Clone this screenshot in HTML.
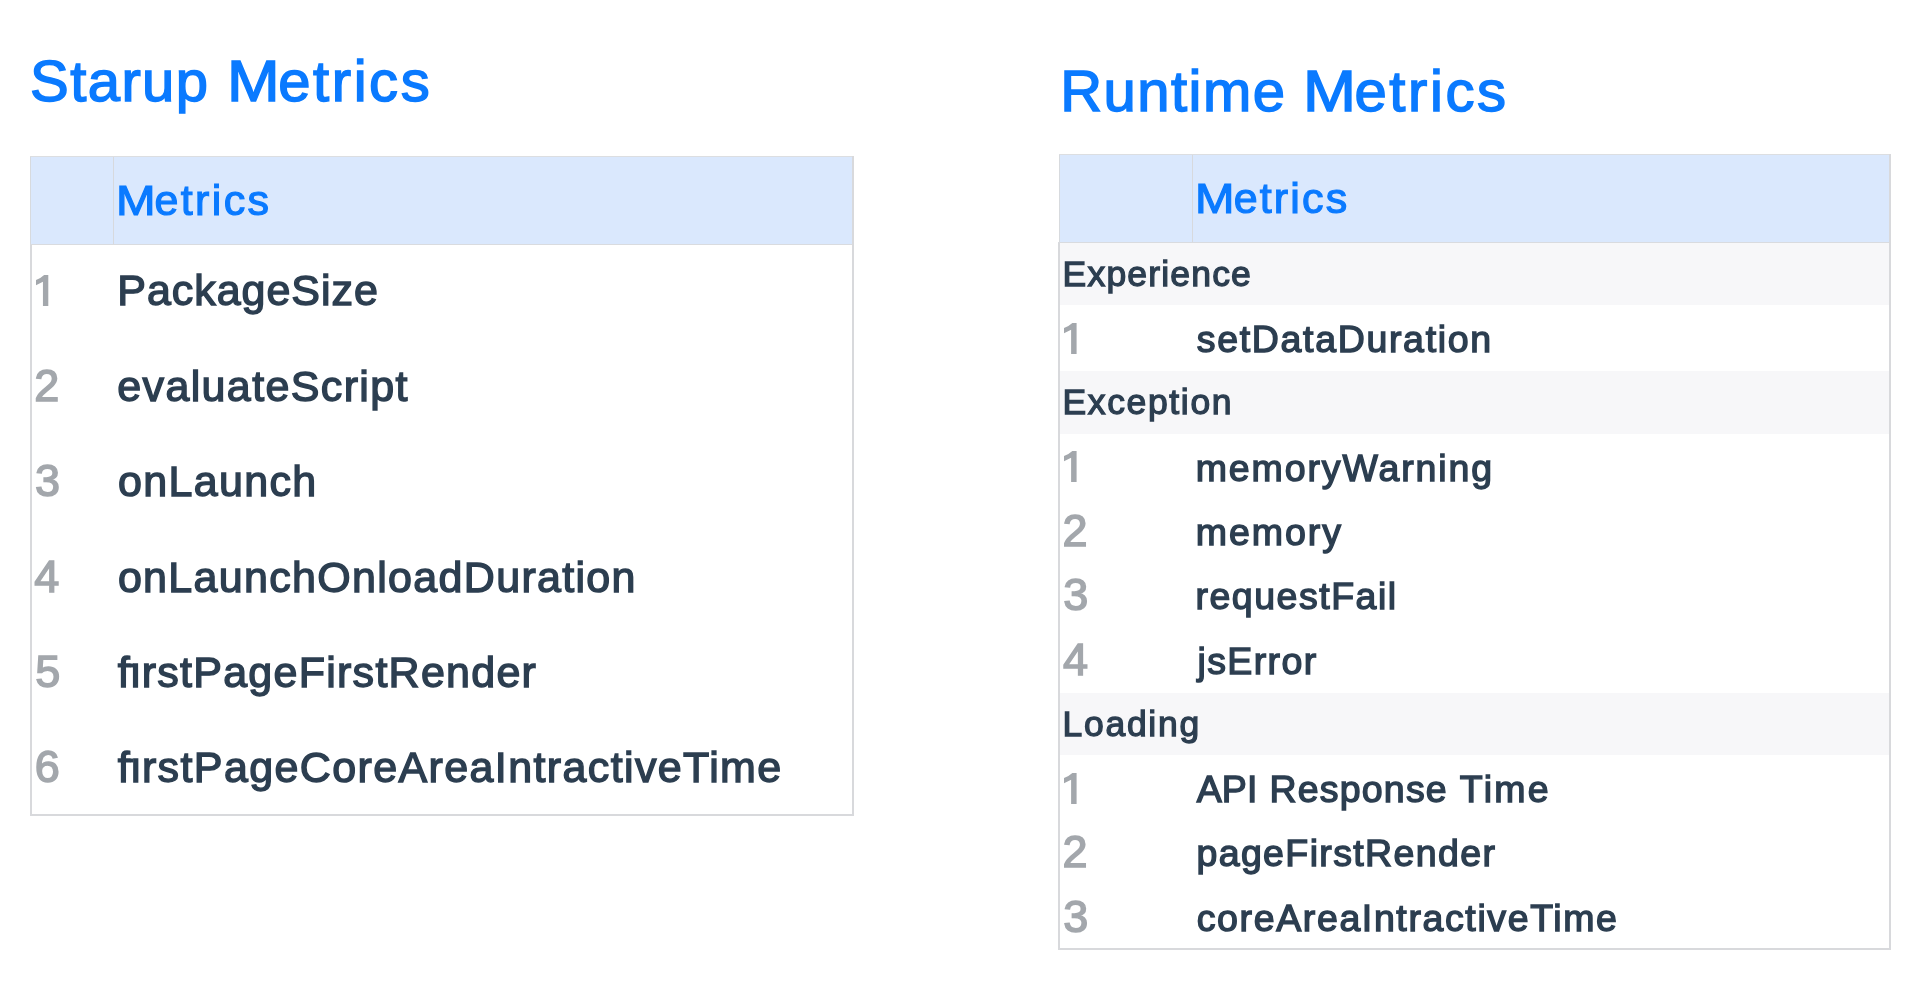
<!DOCTYPE html>
<html lang="en"><head><meta charset="utf-8"><title>Metrics</title><style>
html,body{margin:0;padding:0;background:#fff;}
body{width:1920px;height:988px;position:relative;overflow:hidden;font-family:"Liberation Sans",sans-serif;}
.t{position:absolute;white-space:nowrap;line-height:1;}
.L{position:absolute;left:0;top:0;width:1920px;height:988px;will-change:transform;}
.b{position:absolute;box-sizing:border-box;}

</style></head><body>
<div class="b" style="left:31px;top:157px;width:821px;height:87px;background:#dae8fd;"></div>
<div class="b" style="left:30px;top:156px;width:824px;height:1px;background:#dcdee1;"></div>
<div class="b" style="left:30px;top:157px;width:1px;height:87px;background:#d7dade;"></div>
<div class="b" style="left:113px;top:157px;width:1px;height:87px;background:#d7d9dd;"></div>
<div class="b" style="left:30px;top:244px;width:824px;height:1px;background:#d9dbdf;"></div>
<div class="b" style="left:30px;top:245px;width:2px;height:571px;background:#d8d9dc;"></div>
<div class="b" style="left:852px;top:156px;width:2px;height:660px;background:#d8d9dc;"></div>
<div class="b" style="left:30px;top:814px;width:824px;height:2px;background:#d8d9dc;"></div>
<div class="b" style="left:1060px;top:155px;width:829px;height:87px;background:#dae8fd;"></div>
<div class="b" style="left:1060px;top:243px;width:829px;height:62px;background:#f7f7f9;"></div>
<div class="b" style="left:1060px;top:371px;width:829px;height:63px;background:#f7f7f9;"></div>
<div class="b" style="left:1060px;top:693px;width:829px;height:62px;background:#f7f7f9;"></div>
<div class="b" style="left:1059px;top:154px;width:832px;height:1px;background:#dcdee1;"></div>
<div class="b" style="left:1059px;top:155px;width:1px;height:87px;background:#d7dade;"></div>
<div class="b" style="left:1192px;top:155px;width:1px;height:87px;background:#d7d9dd;"></div>
<div class="b" style="left:1058px;top:242px;width:833px;height:1px;background:#d9dbdf;"></div>
<div class="b" style="left:1058px;top:243px;width:2px;height:707px;background:#d8d9dc;"></div>
<div class="b" style="left:1889px;top:154px;width:2px;height:796px;background:#d8d9dc;"></div>
<div class="b" style="left:1058px;top:948px;width:833px;height:2px;background:#d8d9dc;"></div>
<svg class="b" style="left:35.80px;top:275.00px;overflow:visible" width="12.30" height="31.00" viewBox="0 0 12.4 31" preserveAspectRatio="none"><path fill="#a3a7ac" d="M12.4 0V31H7V6.7L0 10.2V5.1Q4.6 3.4 8.2 0Z"/></svg>
<svg class="b" style="left:1064.10px;top:322.90px;overflow:visible" width="12.60" height="31.00" viewBox="0 0 12.4 31" preserveAspectRatio="none"><path fill="#a3a7ac" d="M12.4 0V31H7V6.7L0 10.2V5.1Q4.6 3.4 8.2 0Z"/></svg>
<svg class="b" style="left:1064.10px;top:451.44px;overflow:visible" width="12.60" height="31.00" viewBox="0 0 12.4 31" preserveAspectRatio="none"><path fill="#a3a7ac" d="M12.4 0V31H7V6.7L0 10.2V5.1Q4.6 3.4 8.2 0Z"/></svg>
<svg class="b" style="left:1064.10px;top:772.79px;overflow:visible" width="12.60" height="31.00" viewBox="0 0 12.4 31" preserveAspectRatio="none"><path fill="#a3a7ac" d="M12.4 0V31H7V6.7L0 10.2V5.1Q4.6 3.4 8.2 0Z"/></svg>
<div class="L">
<span class="t" style="left:30.09px;top:52.00px;font-size:58px;color:#0a7aff;-webkit-text-stroke:1.5px #0a7aff;letter-spacing:1.416px;">Starup </span>
<span class="t" style="left:226.63px;top:52.00px;font-size:58px;color:#0a7aff;-webkit-text-stroke:1.5px #0a7aff;letter-spacing:0.000px;transform:scaleX(1.0898);transform-origin:0 0;">M</span><span class="t" style="left:278.26px;top:52.00px;font-size:58px;color:#0a7aff;-webkit-text-stroke:1.5px #0a7aff;letter-spacing:2.571px;">etrics</span>
<span class="t" style="left:116.01px;top:179.00px;font-size:43px;color:#0a7aff;-webkit-text-stroke:1.2px #0a7aff;letter-spacing:0.000px;transform:scaleX(1.1042);transform-origin:0 0;">M</span><span class="t" style="left:154.45px;top:179.00px;font-size:43px;color:#0a7aff;-webkit-text-stroke:1.2px #0a7aff;letter-spacing:2.373px;">etrics</span>
<span class="t" style="left:117.27px;top:269.00px;font-size:43px;color:#2c3e50;-webkit-text-stroke:1.4px #2c3e50;letter-spacing:0.956px;">PackageSize</span>
<span class="t" style="left:34.29px;top:363.00px;font-size:45px;color:#a3a7ac;-webkit-text-stroke:1.5px #a3a7ac;letter-spacing:0.000px;">2</span>
<span class="t" style="left:117.23px;top:365.00px;font-size:43px;color:#2c3e50;-webkit-text-stroke:1.4px #2c3e50;letter-spacing:1.371px;">evaluateScript</span>
<span class="t" style="left:35.12px;top:458.00px;font-size:45px;color:#a3a7ac;-webkit-text-stroke:1.5px #a3a7ac;letter-spacing:0.000px;">3</span>
<span class="t" style="left:117.89px;top:460.00px;font-size:43px;color:#2c3e50;-webkit-text-stroke:1.4px #2c3e50;letter-spacing:1.355px;">onLaunch</span>
<span class="t" style="left:34.30px;top:554.00px;font-size:45px;color:#a3a7ac;-webkit-text-stroke:1.5px #a3a7ac;letter-spacing:0.000px;">4</span>
<span class="t" style="left:117.89px;top:556.00px;font-size:43px;color:#2c3e50;-webkit-text-stroke:1.4px #2c3e50;letter-spacing:1.311px;">onLaunchOnloadDuration</span>
<span class="t" style="left:35.18px;top:649.00px;font-size:45px;color:#a3a7ac;-webkit-text-stroke:1.5px #a3a7ac;letter-spacing:0.000px;">5</span>
<span class="t" style="left:117.66px;top:651.00px;font-size:43px;color:#2c3e50;-webkit-text-stroke:1.4px #2c3e50;letter-spacing:1.261px;">firstPageFirstRender</span>
<span class="t" style="left:34.63px;top:744.00px;font-size:45px;color:#a3a7ac;-webkit-text-stroke:1.5px #a3a7ac;letter-spacing:0.000px;">6</span>
<span class="t" style="left:117.66px;top:746.00px;font-size:43px;color:#2c3e50;-webkit-text-stroke:1.4px #2c3e50;letter-spacing:1.381px;">firstPageCoreAreaIntractiveTime</span>
<span class="t" style="left:1060.27px;top:62.00px;font-size:58px;color:#0a7aff;-webkit-text-stroke:1.5px #0a7aff;letter-spacing:1.449px;">Runtime </span>
<span class="t" style="left:1302.58px;top:62.00px;font-size:58px;color:#0a7aff;-webkit-text-stroke:1.5px #0a7aff;letter-spacing:0.000px;transform:scaleX(1.0963);transform-origin:0 0;">M</span><span class="t" style="left:1354.47px;top:62.00px;font-size:58px;color:#0a7aff;-webkit-text-stroke:1.5px #0a7aff;letter-spacing:2.601px;">etrics</span>
<span class="t" style="left:1195.21px;top:177.00px;font-size:43px;color:#0a7aff;-webkit-text-stroke:1.2px #0a7aff;letter-spacing:0.000px;transform:scaleX(1.1012);transform-origin:0 0;">M</span><span class="t" style="left:1233.63px;top:177.00px;font-size:43px;color:#0a7aff;-webkit-text-stroke:1.2px #0a7aff;letter-spacing:2.186px;">etrics</span>
<span class="t" style="left:1062.60px;top:257.00px;font-size:35.5px;color:#2c3e50;-webkit-text-stroke:1.3px #2c3e50;letter-spacing:1.178px;">Experience</span>
<span class="t" style="left:1062.53px;top:385.00px;font-size:35.5px;color:#2c3e50;-webkit-text-stroke:1.3px #2c3e50;letter-spacing:1.635px;">Exception</span>
<span class="t" style="left:1062.53px;top:707.00px;font-size:35.5px;color:#2c3e50;-webkit-text-stroke:1.3px #2c3e50;letter-spacing:1.717px;">Loading</span>
<span class="t" style="left:1196.74px;top:321.00px;font-size:37.5px;color:#2c3e50;-webkit-text-stroke:1.4px #2c3e50;letter-spacing:1.673px;">setDataDuration</span>
<span class="t" style="left:1195.69px;top:450.00px;font-size:37.5px;color:#2c3e50;-webkit-text-stroke:1.4px #2c3e50;letter-spacing:1.896px;">memoryWarning</span>
<span class="t" style="left:1062.58px;top:508.00px;font-size:45px;color:#a3a7ac;-webkit-text-stroke:1.5px #a3a7ac;letter-spacing:0.000px;">2</span>
<span class="t" style="left:1195.69px;top:514.00px;font-size:37.5px;color:#2c3e50;-webkit-text-stroke:1.4px #2c3e50;letter-spacing:1.972px;">memory</span>
<span class="t" style="left:1063.27px;top:572.00px;font-size:45px;color:#a3a7ac;-webkit-text-stroke:1.5px #a3a7ac;letter-spacing:0.000px;">3</span>
<span class="t" style="left:1195.51px;top:578.00px;font-size:37.5px;color:#2c3e50;-webkit-text-stroke:1.4px #2c3e50;letter-spacing:1.512px;">requestFail</span>
<span class="t" style="left:1062.93px;top:637.00px;font-size:45px;color:#a3a7ac;-webkit-text-stroke:1.5px #a3a7ac;letter-spacing:0.000px;">4</span>
<span class="t" style="left:1197.46px;top:643.00px;font-size:37.5px;color:#2c3e50;-webkit-text-stroke:1.4px #2c3e50;letter-spacing:1.396px;">jsError</span>
<span class="t" style="left:1196.66px;top:771.00px;font-size:37.5px;color:#2c3e50;-webkit-text-stroke:1.4px #2c3e50;letter-spacing:0.195px;">API </span>
<span class="t" style="left:1269.46px;top:771.00px;font-size:37.5px;color:#2c3e50;-webkit-text-stroke:1.4px #2c3e50;letter-spacing:1.196px;">Response </span>
<span class="t" style="left:1459.84px;top:771.00px;font-size:37.5px;color:#2c3e50;-webkit-text-stroke:1.4px #2c3e50;letter-spacing:2.303px;">Time</span>
<span class="t" style="left:1062.58px;top:829.00px;font-size:45px;color:#a3a7ac;-webkit-text-stroke:1.5px #a3a7ac;letter-spacing:0.000px;">2</span>
<span class="t" style="left:1196.43px;top:835.00px;font-size:37.5px;color:#2c3e50;-webkit-text-stroke:1.4px #2c3e50;letter-spacing:1.376px;">pageFirstRender</span>
<span class="t" style="left:1063.27px;top:894.00px;font-size:45px;color:#a3a7ac;-webkit-text-stroke:1.5px #a3a7ac;letter-spacing:0.000px;">3</span>
<span class="t" style="left:1196.76px;top:900.00px;font-size:37.5px;color:#2c3e50;-webkit-text-stroke:1.4px #2c3e50;letter-spacing:1.618px;">coreAreaIntractiveTime</span>
<svg class="b" style="left:0;top:0" width="1920" height="988"><rect x="131.50" y="654.00" width="8" height="7.6" fill="#fff"/><rect x="129.96" y="663.55" width="3.4" height="3.9" fill="#2c3e50"/></svg>
<svg class="b" style="left:0;top:0" width="1920" height="988"><rect x="131.50" y="749.00" width="8" height="7.6" fill="#fff"/><rect x="129.96" y="758.55" width="3.4" height="3.9" fill="#2c3e50"/></svg>
</div>
</body></html>
